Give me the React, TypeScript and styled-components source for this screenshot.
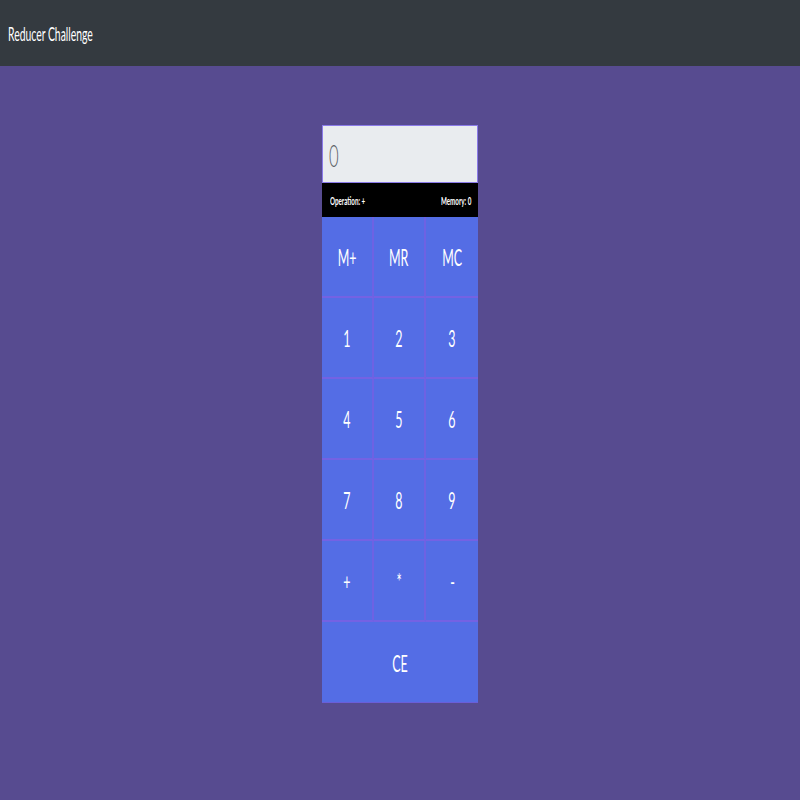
import React from "react";
import styled, { createGlobalStyle } from "styled-components";

const Global = createGlobalStyle`
  html, body { margin: 0; padding: 0; }
  body {
    background: #574b90;
    font-family: Lato, "Open Sans", sans-serif;
    min-height: 800px;
  }
`;

const NavBar = styled.nav`
  height: 66px;
  background: #343a40;
  display: flex;
  align-items: center;
  padding: 0 8px;
  box-sizing: border-box;
`;

const Squish = styled.span<{ $origin?: string }>`
  display: inline-block;
  transform: scaleX(0.52);
  transform-origin: ${(p) => p.$origin || "center"};
  white-space: nowrap;
`;

const Brand = styled.div`
  color: #ffffff;
  font-size: 20px;
  line-height: 1;
`;

const Main = styled.main`
  display: flex;
  justify-content: center;
  padding-top: 59px;
`;

const Calc = styled.div`
  width: 156px;
  display: flex;
  flex-direction: column;
`;

const Display = styled.div`
  height: 58px;
  box-sizing: border-box;
  background: #e9ecef;
  border: 1px solid #8a7ae8;
  display: flex;
  align-items: center;
  padding-left: 6px;
  color: #5a5f66;
  font-size: 32px;
  font-weight: 300;
`;

const InfoBar = styled.div`
  height: 34px;
  background: #000000;
  display: flex;
  align-items: center;
  justify-content: space-between;
  padding: 0 7px 0 8px;
  color: #ffffff;
  font-size: 12px;
  font-weight: 700;
`;

const Grid = styled.div`
  display: grid;
  grid-template-columns: repeat(3, 52px);
  grid-auto-rows: 81px;
`;

const Key = styled.button<{ $wide?: boolean }>`
  grid-column: ${(p) => (p.$wide ? "span 3" : "auto")};
  box-sizing: border-box;
  background: #546de5;
  border: none;
  border-right: 2px solid #6d62e3;
  border-bottom: 2px solid #7462e3;
  color: #ffffff;
  font-family: Lato, "Open Sans", sans-serif;
  font-size: 24px;
  font-weight: 400;
  padding: 0;
  display: flex;
  align-items: center;
  justify-content: center;
  cursor: pointer;
  &:nth-child(3n) { border-right: none; }
  &:last-child { border-right: none; border-bottom: 1px solid #6a5ed8; }
`;

const keys = ["M+", "MR", "MC", "1", "2", "3", "4", "5", "6", "7", "8", "9", "+", "*", "-"];

export default function App() {
  return (
    <>
      <Global />
      <NavBar>
        <Brand>
          <Squish $origin="left">Reducer Challenge</Squish>
        </Brand>
      </NavBar>
      <Main>
        <Calc>
          <Display>
            <Squish $origin="left">0</Squish>
          </Display>
          <InfoBar>
            <Squish $origin="left">Operation: +</Squish>
            <Squish $origin="right">Memory: 0</Squish>
          </InfoBar>
          <Grid>
            {keys.map((k) => (
              <Key key={k}>
                <Squish>{k}</Squish>
              </Key>
            ))}
            <Key $wide>
              <Squish>CE</Squish>
            </Key>
          </Grid>
        </Calc>
      </Main>
    </>
  );
}
